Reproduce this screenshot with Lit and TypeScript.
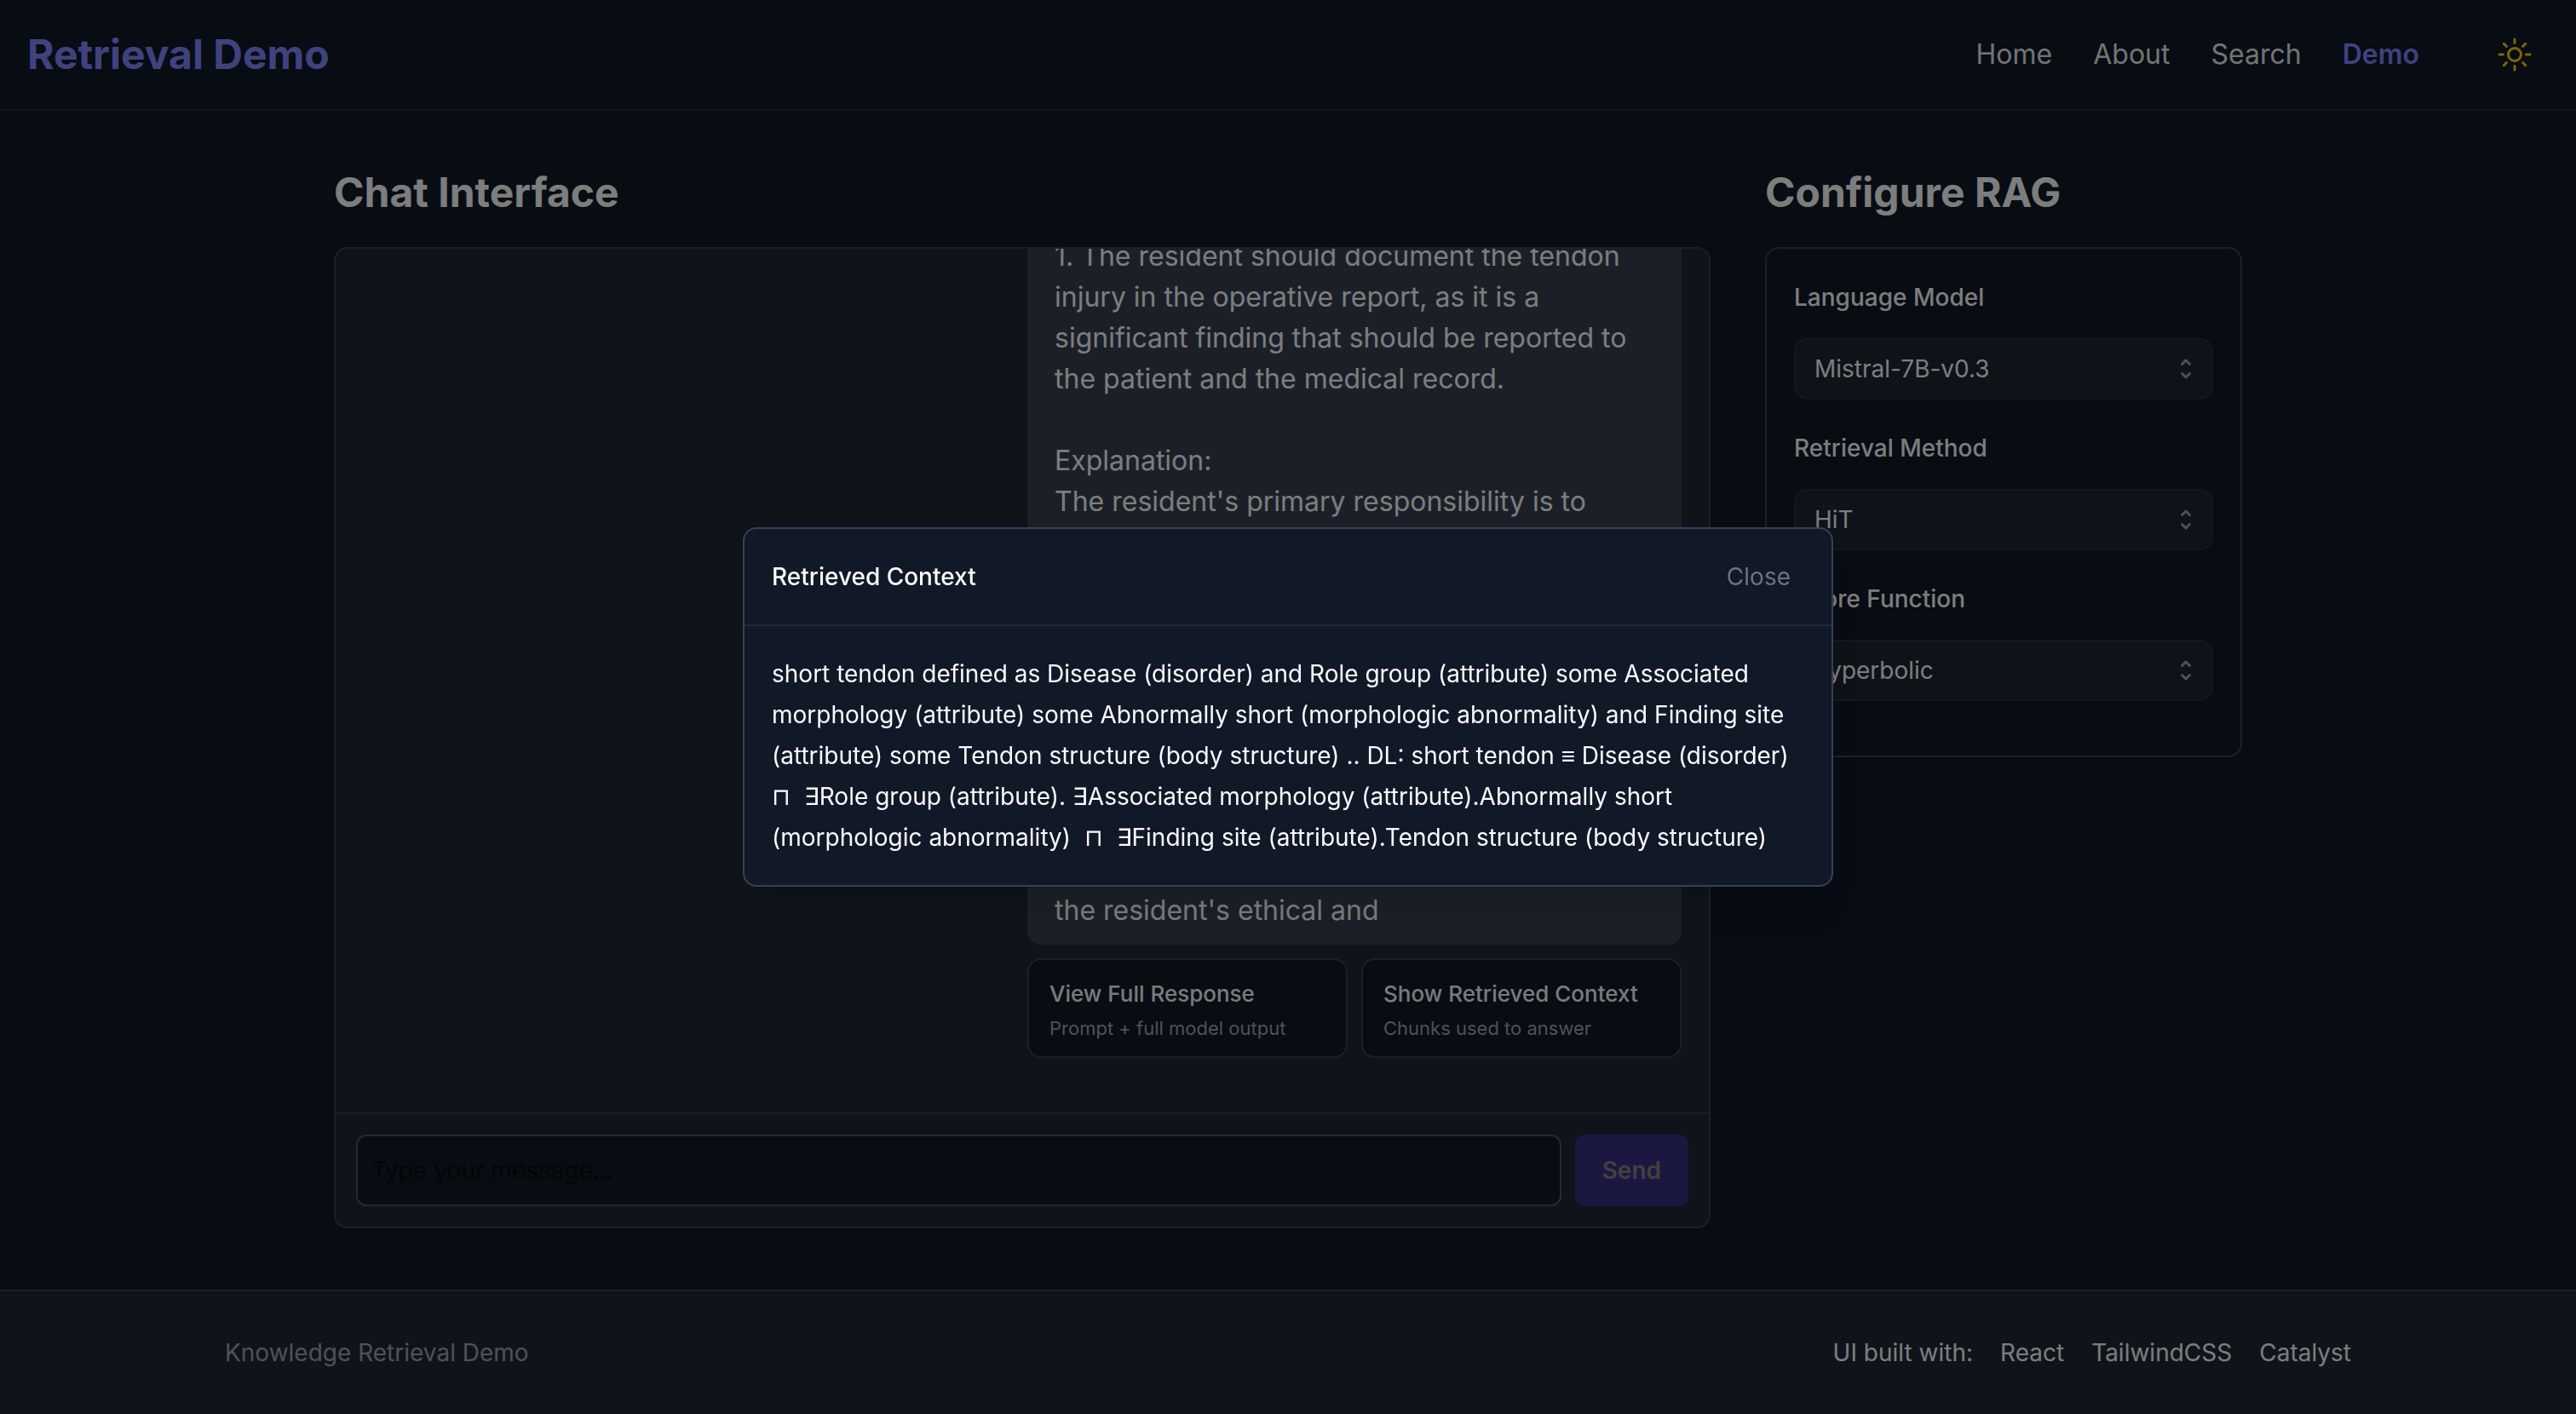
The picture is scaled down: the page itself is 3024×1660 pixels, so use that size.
import { LitElement, css, html, svg } from "lit";
import { customElement, property, state } from "lit/decorators.js";

const base = css`
  *, *::before, *::after { box-sizing: border-box; }
  h1, h2, h3, p { margin: 0; }
  button, input, select { font: inherit; color: inherit; margin: 0; }
  button { cursor: pointer; }
  a { color: inherit; text-decoration: none; }
`;

@customElement("site-header")
export class SiteHeader extends LitElement {
  static styles = [base, css`
    :host { display: block; }
    .bar {
      display: flex; align-items: center; justify-content: space-between;
      height: 130px; padding: 0 32px; border-bottom: 2px solid #1f2937;
    }
    .brand { font-size: 48px; line-height: 64px; font-weight: 700; color: #8184fc; }
    .right { display: flex; align-items: center; gap: 72px; }
    .nav { display: flex; gap: 48px; font-size: 32px; line-height: 48px; color: #e5e7eb; }
    .active { font-weight: 600; color: #8184fc; }
    .theme {
      display: flex; padding: 16px; border: 0; background: none; color: #facc15;
    }
    .theme svg { width: 48px; height: 48px; display: block; }
  `];

  render() {
    return html`
      <header class="bar">
        <a class="brand" href="#">Retrieval Demo</a>
        <div class="right">
          <nav class="nav">
            <a href="#home">Home</a>
            <a href="#about">About</a>
            <a href="#search">Search</a>
            <a class="active" href="#demo" aria-current="page">Demo</a>
          </nav>
          <button class="theme" type="button" aria-label="Toggle theme">
            <svg viewBox="0 0 24 24" fill="none" stroke="currentColor" stroke-width="1.5"
              stroke-linecap="round" stroke-linejoin="round">
              <path d="M12 3v2.25m6.364.386-1.591 1.591M21 12h-2.25m-.386 6.364-1.591-1.591M12 18.75V21m-4.773-4.227-1.591 1.591M5.25 12H3m4.227-4.773L5.636 5.636M15.75 12a3.75 3.75 0 1 1-7.5 0 3.75 3.75 0 0 1 7.5 0Z" />
            </svg>
          </button>
        </div>
      </header>
    `;
  }
}

const firstPart = `1. The resident should document the tendon injury in the operative report, as it is a significant finding that should be reported to the patient and the medical record.

Explanation:
The resident's primary responsibility is to`;

@customElement("chat-panel")
export class ChatPanel extends LitElement {
  static styles = [base, css`
    :host { display: block; }
    .card {
      display: flex; flex-direction: column;
      height: calc(100vh - 508px); min-height: 800px;
      border: 2px solid #374151; border-radius: 16px; background: #1f2937; overflow: hidden;
    }
    .log {
      flex: 1; min-height: 0; overflow: hidden;
      display: flex; flex-direction: column; justify-content: flex-end; align-items: flex-end;
      padding: 0 32px 64px;
    }
    .message { width: 100%; max-width: 768px; display: flex; flex-direction: column; gap: 16px; }
    .bubble {
      display: flex; flex-direction: column; gap: 432px;
      padding: 16px 32px; border-radius: 16px; background: #374151;
      font-size: 32px; line-height: 48px; white-space: pre-line;
    }
    .actions { display: grid; grid-template-columns: 1fr 1fr; gap: 16px; }
    .action {
      display: flex; flex-direction: column; gap: 4px; text-align: left;
      padding: 20px 24px 16px; border: 2px solid #374151; border-radius: 16px; background: #111827;
    }
    .name { font-size: 26px; line-height: 40px; font-weight: 500; color: #f3f4f6; }
    .hint { font-size: 22px; line-height: 33px; color: #9ca3af; }
    .composer {
      display: flex; gap: 16px; padding: 24px; border-top: 2px solid #374151;
      font-size: 28px; line-height: 40px;
    }
    .field {
      flex: 1; min-width: 0; height: 84px; padding: 0 16px;
      border: 2px solid #4b5563; border-radius: 12px; background: #111827;
    }
    .field::placeholder { color: #090a0c; opacity: 1; }
    .send {
      padding: 0 32px; border: 0; border-radius: 12px;
      background: #343080; color: #808282; font-weight: 600;
    }
  `];

  render() {
    return html`
      <section class="card">
        <div class="log">
          <div class="message">
            <div class="bubble"><p>${firstPart}</p><p>the resident's ethical and</p></div>
            <div class="actions">
              <button class="action" type="button">
                <span class="name">View Full Response</span>
                <span class="hint">Prompt + full model output</span>
              </button>
              <button class="action" type="button">
                <span class="name">Show Retrieved Context</span>
                <span class="hint">Chunks used to answer</span>
              </button>
            </div>
          </div>
        </div>
        <form class="composer" @submit=${(e: Event) => e.preventDefault()}>
          <input class="field" type="text" placeholder="Type your message..." aria-label="Message" />
          <button class="send" type="submit" disabled>Send</button>
        </form>
      </section>
    `;
  }
}

interface Setting { id: string; label: string; value: string; }

const settings: Setting[] = [
  { id: "model", label: "Language Model", value: "Mistral-7B-v0.3" },
  { id: "method", label: "Retrieval Method", value: "HiT" },
  { id: "score", label: "Score Function", value: "hyperbolic" },
];

const chevrons = svg`
  <path d="M5.75 10.75L8 13L10.25 10.75" />
  <path d="M10.25 5.25L8 3L5.75 5.25" />
`;

@customElement("config-panel")
export class ConfigPanel extends LitElement {
  static styles = [base, css`
    :host { display: block; }
    .card { padding: 32px; border: 2px solid #374151; border-radius: 16px; font-size: 28px; }
    .row { display: flex; flex-direction: column; gap: 23px; padding-bottom: 32px; }
    .label { line-height: 50px; font-weight: 500; }
    .control { display: grid; align-items: center; }
    .select, .icon { grid-area: 1 / 1; }
    .select {
      appearance: none; width: 100%; height: 72px; padding: 0 60px 0 22px; line-height: 48px;
      border: 2px solid #292f3d; border-radius: 16px; background: #1d2432;
    }
    .icon {
      justify-self: end; width: 32px; height: 32px; margin-right: 16px; pointer-events: none;
      fill: none; stroke: #9ca3af; stroke-width: 1.5; stroke-linecap: round; stroke-linejoin: round;
    }
  `];

  render() {
    return html`
      <section class="card">
        ${settings.map((s) => html`
          <div class="row">
            <label class="label" for=${s.id}>${s.label}</label>
            <div class="control">
              <select class="select" id=${s.id}><option>${s.value}</option></select>
              <svg class="icon" viewBox="0 0 16 16" aria-hidden="true">${chevrons}</svg>
            </div>
          </div>
        `)}
      </section>
    `;
  }
}

@customElement("context-dialog")
export class ContextDialog extends LitElement {
  @property() heading = "";
  @property() text = "";

  static styles = [base, css`
    :host {
      position: fixed; inset: 0; display: grid; place-items: center; padding: 32px;
      background: rgba(0, 0, 0, 0.5);
    }
    .panel {
      width: 100%; max-width: 1280px; border: 2px solid #374151; border-radius: 16px;
      background: #111827; font-size: 28px; line-height: 48px; color: #f9fafb;
      box-shadow: 0 40px 50px -10px rgba(0, 0, 0, 0.1), 0 16px 20px -12px rgba(0, 0, 0, 0.1);
    }
    .head {
      display: flex; align-items: center; justify-content: space-between;
      padding: 32px; border-bottom: 2px solid #1f2937;
    }
    .title { font-size: 28px; font-weight: 500; }
    .close { padding: 0 16px; border: 0; background: none; color: #6b7280; }
    .body { padding: 32px; white-space: pre-wrap; }
  `];

  render() {
    return html`
      <div class="panel" role="dialog" aria-modal="true" aria-labelledby="title">
        <div class="head">
          <h3 class="title" id="title">${this.heading}</h3>
          <button class="close" type="button"
            @click=${() => this.dispatchEvent(new CustomEvent("dismiss"))}>Close</button>
        </div>
        <p class="body">${this.text}</p>
      </div>
    `;
  }
}

const contextText =
  "short tendon defined as Disease (disorder) and Role group (attribute) some Associated " +
  "morphology (attribute) some Abnormally short (morphologic abnormality) and Finding site " +
  "(attribute) some Tendon structure (body structure) .. DL: short tendon ≡ Disease (disorder)  " +
  "⊓  ∃Role group (attribute). ∃Associated morphology (attribute).Abnormally short " +
  "(morphologic abnormality)  ⊓  ∃Finding site (attribute).Tendon structure (body structure)";

@customElement("app-root")
export class AppRoot extends LitElement {
  @state() private open = true;

  static styles = [base, css`
    :host {
      display: flex; flex-direction: column; min-height: 100vh;
      background: #111827; color: #f9fafb;
      font-family: Inter, "Liberation Sans", sans-serif;
    }
    .main {
      flex: 1; display: flex; align-items: flex-start; gap: 64px;
      width: 100%; max-width: 2304px; margin: 0 auto; padding: 64px 32px 72px;
    }
    .chat { flex: 1; min-width: 0; }
    .side { width: 25%; }
    .heading { margin-bottom: 32px; font-size: 48px; line-height: 64px; font-weight: 700; }
    .footer { border-top: 2px solid #374151; background: #1f2937; }
    .inner {
      display: flex; justify-content: space-between;
      max-width: 2560px; margin: 0 auto; padding: 48px 32px;
      font-size: 28px; line-height: 48px;
    }
    .muted { color: #9ca3af; }
    .credits { display: flex; gap: 32px; }
  `];

  render() {
    return html`
      <site-header></site-header>
      <main class="main">
        <div class="chat">
          <h2 class="heading">Chat Interface</h2>
          <chat-panel></chat-panel>
        </div>
        <div class="side">
          <h2 class="heading">Configure RAG</h2>
          <config-panel></config-panel>
        </div>
      </main>
      <footer class="footer">
        <div class="inner">
          <span class="muted">Knowledge Retrieval Demo</span>
          <div class="credits">
            <span>UI built with:</span>
            <a href="#react">React</a>
            <a href="#tailwind">TailwindCSS</a>
            <a href="#catalyst">Catalyst</a>
          </div>
        </div>
      </footer>
      ${this.open ? html`
        <context-dialog heading="Retrieved Context" .text=${contextText}
          @dismiss=${() => { this.open = false; }}></context-dialog>` : ""}
    `;
  }
}
